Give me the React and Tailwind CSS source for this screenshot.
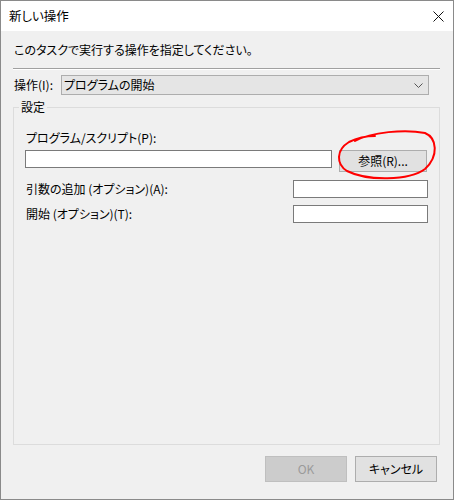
import React from 'react';

const font = { fontFamily: '"Noto Sans CJK JP", "Noto Sans", sans-serif' };

function TextBox({ className }) {
    return <div className={`h-[18px] bg-white border border-[#7a7a7a] ${className}`} />;
}

export default function App() {
    return (
        <div
            style={font}
            className="relative w-[454px] h-[500px] flex flex-col border border-[#8a8a8a] bg-[#f0f0f0] text-[12px] leading-[16px] text-black [font-feature-settings:'palt']"
        >
            {/* タイトルバー */}
            <div className="h-[30px] bg-white flex items-center justify-between pl-[8px] pr-[9px]">
                <span className="text-[12.5px]">新しい操作</span>
                <svg width="11" height="11" viewBox="0 0 11 11" className="mt-[1px]">
                    <path d="M0.5 0.5 L10.5 10.5 M10.5 0.5 L0.5 10.5" stroke="#111" strokeWidth="1" fill="none" />
                </svg>
            </div>

            <div className="flex flex-col pl-[12px] pr-[13px]">
                <div className="mt-[11px] pl-[1px]">このタスクで実行する操作を指定してください。</div>
                <div className="mt-[10px] border-t border-t-[#a0a0a0] border-b border-b-white" />

                {/* 操作 */}
                <div className="mt-[5px] flex items-center pl-[1px]">
                    <span className="w-[47px]">操作(I):</span>
                    <div className="w-[368px] h-[20px] bg-[#e5e5e5] border border-[#adadad] flex items-center justify-between pl-[2px] pr-[5px]">
                        <span>プログラムの開始</span>
                        <svg width="9" height="5" viewBox="0 0 9 5">
                            <path d="M0.5 0.5 L4.5 4.5 L8.5 0.5" stroke="#555" strokeWidth="1" fill="none" />
                        </svg>
                    </div>
                </div>

                {/* 設定 */}
                <fieldset className="mt-[4px] h-[346px] border border-[#dcdcdc] pl-[11px] pr-[11px]">
                    <legend className="-ml-[6px] px-[2px]">設定</legend>
                    <div className="mt-[15px] pl-[1px]">プログラム/スクリプト(P):</div>
                    <div className="mt-[4px] flex items-start">
                        <TextBox className="w-[307px]" />
                        <button className="ml-[7px] w-[88px] h-[22px] bg-[#e1e1e1] border border-[#adadad] flex items-center justify-center">
                            参照(R)...
                        </button>
                    </div>
                    <div className="mt-[8px] flex items-center justify-between">
                        <span className="pl-[1px]">引数の追加 (オプション)(A):</span>
                        <TextBox className="w-[135px]" />
                    </div>
                    <div className="mt-[7px] flex items-center justify-between">
                        <span className="pl-[1px]">開始 (オプション)(T):</span>
                        <TextBox className="w-[135px]" />
                    </div>
                </fieldset>

                {/* ボタン */}
                <div className="mt-[11px] flex justify-end gap-[8px] pr-[3px]">
                    <button className="w-[82px] h-[26px] bg-[#cccccc] border border-[#bfbfbf] text-[#9a9a9a]">OK</button>
                    <button className="w-[82px] h-[26px] bg-[#e1e1e1] border border-[#adadad]">キャンセル</button>
                </div>
            </div>

            {/* 赤丸 */}
            <svg width="104" height="54" viewBox="0 0 104 54" className="absolute left-[334px] top-[127px] pointer-events-none">
                <path
                    d="M20 13 C36 4, 70 1, 90 5 C102 10, 104 28, 90 41 C74 53, 32 53, 12 43 C1 36, 1 22, 14 14 C22 10, 30 8, 40 8"
                    stroke="#ff0000"
                    strokeWidth="2"
                    fill="none"
                    strokeLinecap="round"
                />
            </svg>
        </div>
    );
}
